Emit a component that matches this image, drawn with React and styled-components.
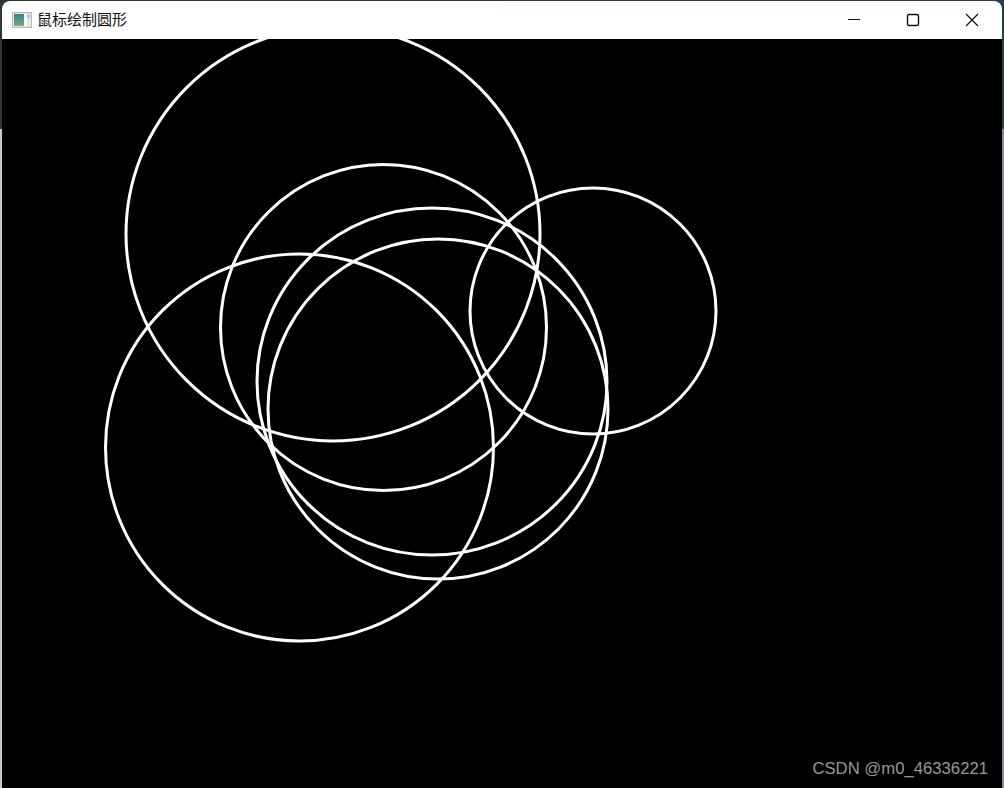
import React from "react";
import styled, { createGlobalStyle } from "styled-components";

const circles = [
  { cx: 333, cy: 234, rx: 207, ry: 207 },
  { cx: 383.5, cy: 327.5, rx: 163, ry: 163 },
  { cx: 432, cy: 381.5, rx: 175, ry: 173.5 },
  { cx: 438, cy: 409, rx: 170, ry: 170 },
  { cx: 299.5, cy: 447.5, rx: 194, ry: 193.5 },
  { cx: 593, cy: 311, rx: 123, ry: 123 },
];

const App = () => {
  return (
    <Desktop>
      <GlobalStyle />
      <Window>
        <TitleBar>
          <AppIcon width="20" height="16" viewBox="0 0 20 16">
            <rect x="0.5" y="0.5" width="19" height="15" fill="#e4e8ea" stroke="#b4b8bb" />
            <defs>
              <linearGradient id="pane" x1="0" y1="0" x2="0" y2="1">
                <stop offset="0" stopColor="#3d7f96" />
                <stop offset="1" stopColor="#74ad7e" />
              </linearGradient>
            </defs>
            <rect x="2" y="2" width="10" height="12" fill="url(#pane)" />
            <rect x="12" y="2" width="3" height="12" fill="#f6f7f4" />
            <rect x="15" y="2" width="3" height="4" fill="#b9c6cc" />
          </AppIcon>
          <Title>鼠标绘制圆形</Title>
          <Controls>
            <ControlButton>
              <svg width="14" height="14" viewBox="0 0 14 14">
                <path d="M1 6.5h12" stroke="#111" strokeWidth="1" fill="none" />
              </svg>
            </ControlButton>
            <ControlButton>
              <svg width="14" height="14" viewBox="0 0 14 14">
                <rect x="1.5" y="1.5" width="11" height="11" rx="1.5" stroke="#111" strokeWidth="1.4" fill="none" />
              </svg>
            </ControlButton>
            <ControlButton>
              <svg width="14" height="14" viewBox="0 0 14 14">
                <path d="M1 1l12 12M13 1L1 13" stroke="#111" strokeWidth="1.2" fill="none" />
              </svg>
            </ControlButton>
          </Controls>
        </TitleBar>
        <Canvas>
          <Drawing viewBox="2 39 1000 749">
            {circles.map((c) => (
              <ellipse
                key={c.cx}
                cx={c.cx}
                cy={c.cy}
                rx={c.rx}
                ry={c.ry}
                fill="none"
                stroke="#fff"
                strokeWidth="3"
              />
            ))}
          </Drawing>
          <Watermark>CSDN @m0_46336221</Watermark>
        </Canvas>
      </Window>
    </Desktop>
  );
};

const GlobalStyle = createGlobalStyle`
  html, body {
    margin: 0;
    padding: 0;
    background: #000;
  }
`;

const Desktop = styled.div`
  width: 1004px;
  height: 788px;
  overflow: hidden;
  padding: 1px 2px 0;
  box-sizing: border-box;
  background:
    linear-gradient(to right, #333 0, #333 50%, #24424d 50%, #24424d 100%) no-repeat left top / 100% 129px,
    linear-gradient(to right, #c9c9c9 2px, #000 2px, #000 1002px, #7d8f96 1002px);
`;

const Window = styled.div`
  height: 100%;
  display: flex;
  flex-direction: column;
  border-radius: 8px 8px 6px 6px;
  overflow: hidden;
  background: #000;
`;

const TitleBar = styled.div`
  height: 38px;
  flex: none;
  display: flex;
  align-items: center;
  padding-left: 10px;
  background: #fff;
`;

const AppIcon = styled.svg`
  flex: none;
  margin-right: 5px;
`;

const Title = styled.div`
  font-family: "Noto Sans CJK SC", "Liberation Sans", sans-serif;
  font-size: 15px;
  color: #111;
  padding-bottom: 3px;
`;

const Controls = styled.div`
  display: flex;
  margin-left: auto;
  margin-right: 1px;
`;

const ControlButton = styled.div`
  width: 59px;
  height: 38px;
  display: flex;
  align-items: center;
  justify-content: center;
  svg {
    display: block;
  }
`;

const Canvas = styled.div`
  position: relative;
  flex: 1;
  background: #000;
`;

const Drawing = styled.svg`
  display: block;
  width: 100%;
  height: 100%;
`;

const Watermark = styled.div`
  position: absolute;
  right: 14px;
  bottom: 9px;
  font-family: "Liberation Sans", Arial, sans-serif;
  font-size: 16.7px;
  color: #989898;
  white-space: nowrap;
`;

export default App;
